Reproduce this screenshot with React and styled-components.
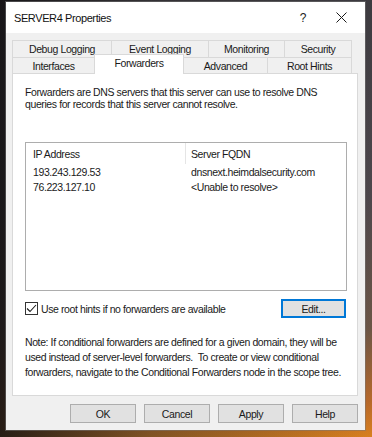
import React from 'react';
import styled, { createGlobalStyle } from 'styled-components';

const Global = createGlobalStyle`
  html, body { margin: 0; padding: 0; }
  body {
    width: 372px;
    height: 437px;
    overflow: hidden;
    font-family: "Liberation Sans", Arial, sans-serif;
    background:
      linear-gradient(90deg, rgba(20, 18, 20, 0.9) 0%, rgba(40, 38, 40, 0.5) 40%, rgba(0, 0, 0, 0) 100%),
      linear-gradient(180deg, #3d3b40 0%, #4d474c 45%, #6b5546 75%, #b8692a 92%, #d9801f 100%);
  }
`;

const backTabs = [
  { label: 'Debug Logging', width: 100 },
  { label: 'Event Logging', width: 98 },
  { label: 'Monitoring', width: 77 },
  { label: 'Security', width: 68 },
];

const frontTabs = [
  { label: 'Interfaces', width: 83 },
  { label: 'Forwarders', width: 90, active: true },
  { label: 'Advanced', width: 85 },
  { label: 'Root Hints', width: 85 },
];

const forwarders = [
  { ip: '193.243.129.53', fqdn: 'dnsnext.heimdalsecurity.com' },
  { ip: '76.223.127.10', fqdn: '<Unable to resolve>' },
];

function App() {
  return (
    <>
      <Global />
      <Window>
        <TitleBar>
          <Title>SERVER4 Properties</Title>
          <TitleButtons>
            <HelpGlyph>?</HelpGlyph>
            <CloseGlyph>
              <svg width="11" height="11" viewBox="0 0 11 11">
                <path d="M0.5 0.5 L10.5 10.5 M10.5 0.5 L0.5 10.5" stroke="#1a1a1a" strokeWidth="1" fill="none" />
              </svg>
            </CloseGlyph>
          </TitleButtons>
        </TitleBar>
        <Body>
          <Tabs>
            <TabRow>
              {backTabs.map((t) => (
                <Tab key={t.label} $w={t.width}>{t.label}</Tab>
              ))}
            </TabRow>
            <TabRow>
              {frontTabs.map((t) => (
                <Tab key={t.label} $w={t.width} $active={t.active}>
                  {t.label}
                </Tab>
              ))}
            </TabRow>
          </Tabs>
          <Panel>
            <Text>
              Forwarders are DNS servers that this server can use to resolve DNS
              <br />
              queries for records that this server cannot resolve.
            </Text>
            <ListBox>
              <ListHeader>
                <IpCol>IP Address</IpCol>
                <HeaderSep />
                <FqdnCol>Server FQDN</FqdnCol>
              </ListHeader>
              {forwarders.map((f) => (
                <ListRow key={f.ip}>
                  <IpCol>{f.ip}</IpCol>
                  <FqdnCol>{f.fqdn}</FqdnCol>
                </ListRow>
              ))}
            </ListBox>
            <OptionRow>
              <CheckLabel>
                <CheckBox>
                  <svg width="11" height="9" viewBox="0 0 11 9">
                    <path d="M1 4.5 L4 7.5 L10 1" stroke="#1a1a1a" strokeWidth="1.1" fill="none" />
                  </svg>
                </CheckBox>
                Use root hints if no forwarders are available
              </CheckLabel>
              <Button $focused $w={65}>Edit...</Button>
            </OptionRow>
            <Note>
              Note: If conditional forwarders are defined for a given domain, they will be
              <br />
              used instead of server-level forwarders.&nbsp; To create or view conditional
              <br />
              forwarders, navigate to the Conditional Forwarders node in the scope tree.
            </Note>
          </Panel>
          <ButtonRow>
            <Button>OK</Button>
            <Button>Cancel</Button>
            <Button>Apply</Button>
            <Button>Help</Button>
          </ButtonRow>
        </Body>
      </Window>
    </>
  );
}

const Window = styled.div`
  margin: 2px 0 0 6px;
  width: 359px;
  height: 428px;
  box-sizing: border-box;
  display: flex;
  flex-direction: column;
  background: #f0f0f0;
  box-shadow: 0 0 0 1px rgba(120, 120, 120, 0.5);
  font-size: 10.5px;
  letter-spacing: -0.4px;
  color: #1a1a1a;
`;

const TitleBar = styled.div`
  height: 31px;
  flex-shrink: 0;
  background: #ffffff;
  display: flex;
  align-items: center;
  justify-content: space-between;
  padding: 0 18px 0 8px;
`;

const Title = styled.div`
  font-size: 11px;
  color: #111;
`;

const TitleButtons = styled.div`
  display: flex;
  align-items: center;
  gap: 30px;
`;

const HelpGlyph = styled.span`
  font-size: 12px;
  color: #222;
`;

const CloseGlyph = styled.span`
  display: flex;
`;

const Body = styled.div`
  display: flex;
  flex-direction: column;
  padding: 7px 7px 0 6px;
`;

const Tabs = styled.div`
  display: flex;
  flex-direction: column;
  padding-left: 1px;
`;

const TabRow = styled.div`
  display: flex;
  height: 16px;
  &:first-child { height: 17px; }
`;

const Tab = styled.div`
  width: ${(p) => p.$w}px;
  box-sizing: border-box;
  display: flex;
  align-items: center;
  justify-content: center;
  border: 1px solid #d9d9d9;
  border-bottom: none;
  margin-left: -1px;
  background: ${(p) => (p.$active ? '#ffffff' : '#f0f0f0')};
  color: #1a1a1a;
  white-space: nowrap;
  ${(p) =>
    p.$active &&
    `
    position: relative;
    z-index: 2;
    margin-top: -3px;
    height: 20px;
    padding-bottom: 3px;
  `}
`;

const Panel = styled.div`
  height: 323px;
  box-sizing: border-box;
  background: #ffffff;
  border: 1px solid #d9d9d9;
  padding: 12px 9px 0 12px;
  display: flex;
  flex-direction: column;
`;

const Text = styled.p`
  margin: 0;
  line-height: 12px;
  white-space: nowrap;
`;

const ListBox = styled.div`
  margin-top: 32px;
  width: 322px;
  height: 149px;
  flex-shrink: 0;
  box-sizing: border-box;
  border: 1px solid #adadad;
  display: flex;
  flex-direction: column;
`;

const ListHeader = styled.div`
  display: flex;
  align-items: center;
  height: 21px;
  position: relative;
`;

const HeaderSep = styled.div`
  position: absolute;
  left: 159px;
  top: 0;
  height: 21px;
  width: 1px;
  background: #e5e5e5;
`;

const ListRow = styled.div`
  display: flex;
  align-items: center;
  height: 15px;
`;

const IpCol = styled.div`
  width: 159px;
  padding-left: 7px;
  box-sizing: border-box;
  flex-shrink: 0;
`;

const FqdnCol = styled.div`
  padding-left: 6px;
  white-space: nowrap;
`;

const OptionRow = styled.div`
  margin-top: 8px;
  display: flex;
  align-items: center;
  justify-content: space-between;
  width: 321px;
`;

const CheckLabel = styled.label`
  display: flex;
  align-items: center;
  gap: 3px;
`;

const CheckBox = styled.span`
  width: 13px;
  height: 13px;
  box-sizing: border-box;
  border: 1px solid #333;
  background: #fff;
  display: flex;
  align-items: center;
  justify-content: center;
`;

const Button = styled.div`
  width: ${(p) => p.$w || 66}px;
  height: 19px;
  box-sizing: border-box;
  display: flex;
  align-items: center;
  justify-content: center;
  background: #e1e1e1;
  border: ${(p) => (p.$focused ? '2px solid #0078d7' : '1px solid #adadad')};
  color: #1a1a1a;
`;

const Note = styled.p`
  margin: 17px 0 0;
  line-height: 15px;
  white-space: nowrap;
`;

const ButtonRow = styled.div`
  display: flex;
  justify-content: flex-end;
  gap: 8px;
  margin-top: 8px;
`;

export default App;
